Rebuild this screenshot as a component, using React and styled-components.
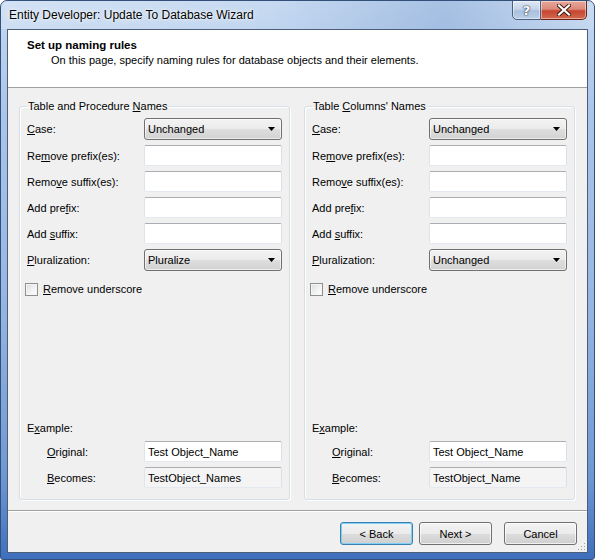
import React from "react";
import styled, { createGlobalStyle } from "styled-components";

const GlobalStyle = createGlobalStyle`
  html, body {
    margin: 0;
    padding: 0;
    background: #ffffff;
  }
  body {
    font-family: "Liberation Sans", Arial, sans-serif;
    font-size: 11px;
    color: #000;
  }
  * {
    box-sizing: border-box;
  }
`;

const groups = [
  {
    title: ["Table and Procedure ", "N", "ames"],
    caseValue: "Unchanged",
    plural: "Pluralize",
    becomes: "TestObject_Names",
  },
  {
    title: ["Table ", "C", "olumns' Names"],
    caseValue: "Unchanged",
    plural: "Unchanged",
    becomes: "TestObject_Name",
  },
];

const textRows = [
  ["Re", "m", "ove prefix(es):"],
  ["Remo", "v", "e suffix(es):"],
  ["Add pre", "f", "ix:"],
  ["Add ", "s", "uffix:"],
];

const Window = styled.div`
  width: 595px;
  height: 560px;
  display: flex;
  flex-direction: column;
  border: 1px solid #33507a;
  border-radius: 7px 7px 3px 3px;
  background: linear-gradient(
    to bottom,
    #c4d8f0 0%,
    #aac5ea 20%,
    #95b5e1 55%,
    #6f98d3 85%,
    #3f6fbd 100%
  );
  overflow: hidden;
`;

const TitleBar = styled.div`
  height: 28px;
  display: flex;
  align-items: flex-start;
  padding: 0 7px 0 8px;
  background: linear-gradient(
    to right,
    rgba(255, 255, 255, 0.25) 0%,
    rgba(255, 255, 255, 0.05) 45%,
    rgba(40, 90, 170, 0.18) 75%,
    rgba(255, 255, 255, 0.1) 100%
  );
`;

const Caption = styled.div`
  font-size: 12px;
  line-height: 28px;
  color: #000;
  text-shadow: 0 0 6px rgba(255, 255, 255, 0.9), 0 0 2px #fff;
`;

const CaptionButtons = styled.div`
  margin-left: auto;
  display: flex;
  margin-top: -1px;
`;

const CaptionButton = styled.div`
  width: ${({ $close }) => ($close ? "46px" : "29px")};
  height: 20px;
  display: flex;
  align-items: center;
  justify-content: center;
  border: 1px solid ${({ $close }) => ($close ? "#6b2318" : "#4b5f7e")};
  border-left-width: ${({ $close }) => ($close ? "0" : "1px")};
  border-radius: ${({ $close }) => ($close ? "0 0 5px 0" : "0 0 0 5px")};
  background: ${({ $close }) =>
    $close
      ? "linear-gradient(to bottom, #e8a89a 0%, #dc8a7a 45%, #c8452f 55%, #d2694f 100%)"
      : "linear-gradient(to bottom, #dfe8f4 0%, #c6d5ea 45%, #a9bfdd 55%, #bccfe8 100%)"};
  box-shadow: inset 0 0 0 1px rgba(255, 255, 255, 0.45);
  color: #fff;
  font-family: "DejaVu Sans", sans-serif;
  font-weight: bold;
  font-size: 13px;
  text-shadow: 0 0 2px #20304a, 0 0 1px #20304a;
`;

const Client = styled.div`
  flex: 1;
  margin: 0 6px 6px 6px;
  border: 1px solid #4b5d78;
  background: #f0f0f0;
  display: flex;
  flex-direction: column;
  position: relative;
`;

const Header = styled.div`
  height: 58px;
  background: #ffffff;
  border-bottom: 1px solid #a0a0a0;
  padding: 8px 0 0 19px;
`;

const Heading = styled.div`
  font-weight: bold;
  font-size: 11.5px;
  line-height: 15px;
`;

const Subheading = styled.div`
  margin-left: 24px;
  line-height: 15px;
`;

const Body = styled.div`
  flex: 1;
  display: flex;
  gap: 14px;
  padding: 11px 12px 0 11px;
`;

const Group = styled.fieldset`
  flex: 0 0 271px;
  margin: 0;
  padding: 5px 7px 11px 7px;
  border: 1px solid #d5dfe5;
  border-radius: 3px;
  box-shadow: inset 1px 1px 0 #fff, 1px 1px 0 #fff;
  display: flex;
  flex-direction: column;
  min-width: 0;
`;

const Legend = styled.legend`
  padding: 0 1px;
  line-height: 14px;
`;

const Fields = styled.div`
  display: grid;
  grid-template-columns: ${({ $indent }) =>
    $indent ? "20px 97px 138px" : "117px 138px"};
  row-gap: 5px;
  align-items: center;
`;

const Label = styled.div`
  grid-column: ${({ $indent }) => ($indent ? "2" : "1")};
  line-height: 14px;
  white-space: nowrap;
`;

const Combo = styled.div`
  height: 22px;
  display: flex;
  align-items: center;
  padding: 0 6px 0 3px;
  border: 1px solid #707070;
  border-radius: 3px;
  background: linear-gradient(
    to bottom,
    #f3f3f3 0%,
    #ebebeb 50%,
    #dedede 51%,
    #d2d2d2 100%
  );
  box-shadow: inset 0 0 0 1px rgba(255, 255, 255, 0.6);

  span {
    flex: 1;
  }
`;

const TextBox = styled.div`
  grid-column: ${({ $indent }) => ($indent ? "3" : "2")};
  height: 21px;
  display: flex;
  align-items: center;
  padding: 0 3px;
  border: 1px solid;
  border-color: #abadb3 #dbdfe6 #e3e9ef #e2e3ea;
  border-radius: 2px;
  background: ${({ $readOnly }) => ($readOnly ? "#f4f4f4" : "#ffffff")};
  white-space: nowrap;
`;

const CheckRow = styled.label`
  display: flex;
  align-items: center;
  gap: 5px;
  margin: 11px 0 0 -2px;
  line-height: 14px;
`;

const CheckBox = styled.span`
  width: 13px;
  height: 13px;
  border: 1px solid #8e8f8f;
  background: linear-gradient(135deg, #dcdcdc 0%, #f4f4f4 60%, #ffffff 100%);
  box-shadow: inset 0 0 0 1px #f4f4f4;
`;

const Spacer = styled.div`
  flex: 1;
`;

const ExampleLabel = styled.div`
  line-height: 14px;
  margin-bottom: 6px;
`;

const Separator = styled.div`
  margin-top: 10px;
  height: 2px;
  border-top: 1px solid #a0a0a0;
  border-bottom: 1px solid #ffffff;
`;

const Footer = styled.div`
  display: flex;
  justify-content: flex-end;
  padding: 10px 10px 7px 0;
`;

const Button = styled.div`
  width: 73px;
  height: 23px;
  margin-left: ${({ $gap }) => $gap}px;
  display: flex;
  align-items: center;
  justify-content: center;
  border: 1px solid ${({ $default }) => ($default ? "#3c7fb1" : "#707070")};
  border-radius: 3px;
  background: linear-gradient(
    to bottom,
    #f3f3f3 0%,
    #ebebeb 50%,
    #dddddd 51%,
    #cfcfcf 100%
  );
  box-shadow: inset 0 0 0 1px
    ${({ $default }) => ($default ? "#7fd0f4" : "rgba(255,255,255,0.7)")};
`;

const Grip = styled.svg`
  position: absolute;
  right: 1px;
  bottom: 1px;
`;

const Key = ({ parts }) => (
  <>
    {parts[0]}
    <u>{parts[1]}</u>
    {parts[2]}
  </>
);

const Arrow = () => (
  <svg width="7" height="4" viewBox="0 0 7 4">
    <path d="M0 0h7L3.5 4z" fill="#000" />
  </svg>
);

const NamingGroup = ({ group }) => (
  <Group>
    <Legend>
      <Key parts={group.title} />
    </Legend>
    <Fields>
      <Label>
        <Key parts={["", "C", "ase:"]} />
      </Label>
      <Combo>
        <span>{group.caseValue}</span>
        <Arrow />
      </Combo>
      {textRows.map((row) => (
        <React.Fragment key={row.join("")}>
          <Label>
            <Key parts={row} />
          </Label>
          <TextBox />
        </React.Fragment>
      ))}
      <Label>
        <Key parts={["", "P", "luralization:"]} />
      </Label>
      <Combo>
        <span>{group.plural}</span>
        <Arrow />
      </Combo>
    </Fields>
    <CheckRow>
      <CheckBox />
      <span>
        <Key parts={["", "R", "emove underscore"]} />
      </span>
    </CheckRow>
    <Spacer />
    <ExampleLabel>
      <Key parts={["E", "x", "ample:"]} />
    </ExampleLabel>
    <Fields $indent>
      <Label $indent>
        <Key parts={["", "O", "riginal:"]} />
      </Label>
      <TextBox $indent>Test Object_Name</TextBox>
      <Label $indent>
        <Key parts={["", "B", "ecomes:"]} />
      </Label>
      <TextBox $indent $readOnly>
        {group.becomes}
      </TextBox>
    </Fields>
  </Group>
);

export default function App() {
  return (
    <>
      <GlobalStyle />
      <Window>
        <TitleBar>
          <Caption>Entity Developer: Update To Database Wizard</Caption>
          <CaptionButtons>
            <CaptionButton>?</CaptionButton>
            <CaptionButton $close>
              <svg width="14" height="12" viewBox="0 0 14 12">
                <path
                  d="M2 1.5l10 9M12 1.5l-10 9"
                  stroke="#3a1810"
                  strokeWidth="4"
                  strokeLinecap="square"
                />
                <path
                  d="M2 1.5l10 9M12 1.5l-10 9"
                  stroke="#fff"
                  strokeWidth="2.2"
                  strokeLinecap="square"
                />
              </svg>
            </CaptionButton>
          </CaptionButtons>
        </TitleBar>
        <Client>
          <Header>
            <Heading>Set up naming rules</Heading>
            <Subheading>
              On this page, specify naming rules for database objects and
              their elements.
            </Subheading>
          </Header>
          <Body>
            {groups.map((g) => (
              <NamingGroup key={g.title.join("")} group={g} />
            ))}
          </Body>
          <Separator />
          <Footer>
            <Button $default $gap={0}>
              &lt; Back
            </Button>
            <Button $gap={6}>Next &gt;</Button>
            <Button $gap={12}>Cancel</Button>
          </Footer>
          <Grip width="10" height="10" viewBox="0 0 10 10">
            {[
              [8, 2],
              [8, 5],
              [5, 5],
              [8, 8],
              [5, 8],
              [2, 8],
            ].map(([x, y]) => (
              <rect key={`${x}-${y}`} x={x} y={y} width="1" height="1" fill="#a0a0a0" />
            ))}
          </Grip>
        </Client>
      </Window>
    </>
  );
}
